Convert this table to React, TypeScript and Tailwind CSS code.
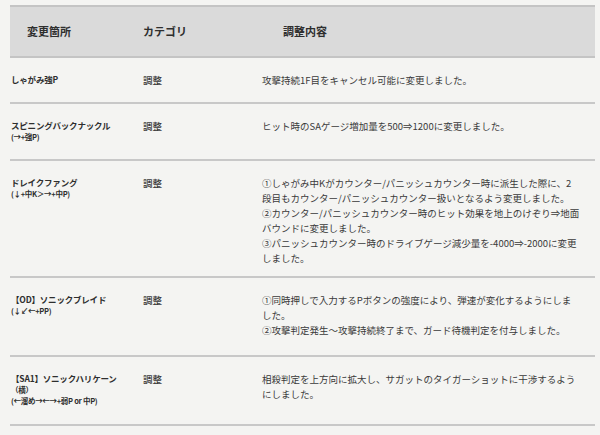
import React from 'react';

type Row = {
  name: string;
  sub?: string[];
  category: string;
  lines: string[];
  height: number;
};

// 改行位置は元の表に合わせて明示
const rows: Row[] = [
  {
    name: 'しゃがみ強P',
    category: '調整',
    lines: ['攻撃持続1F目をキャンセル可能に変更しました。'],
    height: 46,
  },
  {
    name: 'スピニングバックナックル',
    sub: ['(→+強P)'],
    category: '調整',
    lines: ['ヒット時のSAゲージ増加量を500⇒1200に変更しました。'],
    height: 57,
  },
  {
    name: 'ドレイクファング',
    sub: ['(↓+中K＞→+中P)'],
    category: '調整',
    lines: [
      '①しゃがみ中Kがカウンター/パニッシュカウンター時に派生した際に、2',
      '段目もカウンター/パニッシュカウンター扱いとなるよう変更しました。',
      '②カウンター/パニッシュカウンター時のヒット効果を地上のけぞり⇒地面',
      'バウンドに変更しました。',
      '③パニッシュカウンター時のドライブゲージ減少量を-4000⇒-2000に変更',
      'しました。',
    ],
    height: 117,
  },
  {
    name: '【OD】ソニックブレイド',
    sub: ['(↓↙←+PP)'],
    category: '調整',
    lines: [
      '①同時押しで入力するPボタンの強度により、弾速が変化するようにしま',
      'した。',
      '②攻撃判定発生～攻撃持続終了まで、ガード待機判定を付与しました。',
    ],
    height: 79,
  },
  {
    name: '【SA1】ソニックハリケーン',
    sub: ['（横）', '(←溜め→←→+弱P or 中P)'],
    category: '調整',
    lines: [
      '相殺判定を上方向に拡大し、サガットのタイガーショットに干渉するよう',
      'にしました。',
    ],
    height: 69,
  },
];

const font = { fontFamily: '"Noto Sans CJK JP", "Noto Sans", sans-serif' };

export default function App() {
  return (
    <div
      className="w-[600px] h-[435px] overflow-hidden bg-[#f4f4f2] pl-[10px] pr-[5px] pt-[5px] text-[#2e2e2e]"
      style={font}
    >
      {/* ヘッダー */}
      <div className="grid grid-cols-[132px_120px_1fr] h-[53px] items-center bg-[#dadada] border-t-2 border-b-2 border-[#c4c4c4] text-[11px] font-bold">
        <div className="pl-[17px]">変更箇所</div>
        <div className="pl-[1px]">カテゴリ</div>
        <div className="pl-[21px]">調整内容</div>
      </div>

      {rows.map((row, i) => (
        <div
          key={i}
          className="grid grid-cols-[132px_120px_1fr] border-b-2 border-[#c8c8c8] pt-[17px]"
          style={{ height: row.height }}
        >
          <div className="pl-[1px] font-bold leading-[11px] -mt-[1px]">
            <div className="text-[8.5px] tracking-[-0.2px]">{row.name}</div>
            {row.sub &&
              row.sub.map((s, j) => (
                <div key={j} className="text-[7.5px] tracking-[-0.3px]">
                  {s}
                </div>
              ))}
          </div>
          <div className="pl-[1px] text-[9.5px] leading-[15px] text-[#3a3a3a] font-medium -mt-[2px]">
            {row.category}
          </div>
          <div className="text-[9.5px] leading-[15px] text-[#3a3a3a] -mt-[2px]">
            {row.lines.map((l, j) => (
              <div key={j} className="whitespace-nowrap">
                {l}
              </div>
            ))}
          </div>
        </div>
      ))}
    </div>
  );
}
